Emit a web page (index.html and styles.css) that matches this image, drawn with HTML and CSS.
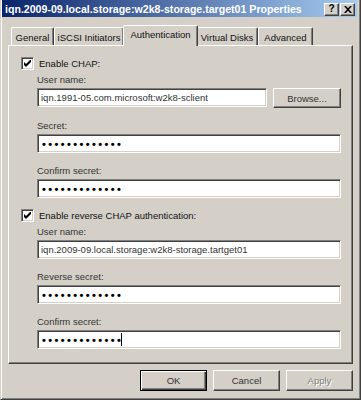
FILE: index.html
```html
<!DOCTYPE html>
<html>
<head>
<meta charset="utf-8">
<link rel="stylesheet" href="styles.css">
</head>
<body>
<div class="window">
  <div class="titlebar">
    <span class="title">iqn.2009-09.local.storage:w2k8-storage.target01 Properties</span>
    <div class="tbtns">
      <span class="tbtn help">?</span>
      <span class="tbtn close"><svg width="8" height="7" viewBox="0 0 8 7"><path d="M0 0h2l2 2.2L6 0h2L5 3.5 8 7H6L4 4.8 2 7H0l3-3.5z" fill="#000"/></svg></span>
    </div>
  </div>
  <div class="tabs">
    <div class="tab t-general">General</div>
    <div class="tab t-iscsi">iSCSI Initiators</div>
    <div class="tab t-auth active">Authentication</div>
    <div class="tab t-vd">Virtual Disks</div>
    <div class="tab t-adv">Advanced</div>
  </div>
  <div class="panel">
    <div class="check-row">
      <span class="checkbox"><svg width="7" height="7" viewBox="0 0 7 7"><path d="M0 2v3l2 2 5-5V-1L2 4z" fill="#000"/></svg></span>
      <span>Enable CHAP:</span>
    </div>
    <div class="group first">
      <div class="label">User name:</div>
      <div class="row">
        <div class="field short">iqn.1991-05.com.microsoft:w2k8-sclient</div>
        <div class="button browse">Browse...</div>
      </div>
    </div>
    <div class="group">
      <div class="label">Secret:</div>
      <div class="field"><span class="dots">•••••••••••••</span></div>
    </div>
    <div class="group">
      <div class="label">Confirm secret:</div>
      <div class="field"><span class="dots">•••••••••••••</span></div>
    </div>
    <div class="check-row second">
      <span class="checkbox"><svg width="7" height="7" viewBox="0 0 7 7"><path d="M0 2v3l2 2 5-5V-1L2 4z" fill="#000"/></svg></span>
      <span>Enable reverse CHAP authentication:</span>
    </div>
    <div class="group first">
      <div class="label">User name:</div>
      <div class="field">iqn.2009-09.local.storage:w2k8-storage.tartget01</div>
    </div>
    <div class="group">
      <div class="label">Reverse secret:</div>
      <div class="field"><span class="dots">•••••••••••••</span></div>
    </div>
    <div class="group">
      <div class="label">Confirm secret:</div>
      <div class="field focused"><span class="dots">•••••••••••••</span><span class="caret"></span></div>
    </div>
  </div>
  <div class="footer">
    <div class="button default">OK</div>
    <div class="button">Cancel</div>
    <div class="button disabled">Apply</div>
  </div>
</div>
</body>
</html>
```
FILE: styles.css
```css
html, body {
  margin: 0;
  padding: 0;
  background: #d4d0c8;
  overflow: hidden;
}
body {
  font-family: "Liberation Sans", Arial, sans-serif;
  font-size: 9.5px;
  color: #111;
}
.window {
  width: 361px;
  height: 400px;
  box-sizing: border-box;
  background: #d4d0c8;
  border-left: 1px solid #d4d0c8;
  border-right: 1px solid #404040;
  border-bottom: 1px solid #404040;
  box-shadow: inset 1px 0 0 #fff, inset -1px -1px 0 #808080;
  padding: 0 2px 0 1px;
  display: flex;
  flex-direction: column;
}
.titlebar {
  height: 17px;
  background: linear-gradient(to right, #0a246a, #a6caf0);
  display: flex;
  align-items: center;
  justify-content: space-between;
  padding: 0 2px 0 3px;
  margin-right: 1px;
  margin-bottom: -1px;
}
.title {
  color: #fff;
  font-weight: bold;
  font-size: 10.6px;
  white-space: nowrap;
}
.tbtns {
  display: flex;
  gap: 1px;
  margin-top: 1px;
}
.tbtn {
  width: 15px;
  height: 13px;
  box-sizing: border-box;
  background: #d4d0c8;
  border-top: 1px solid #fff;
  border-left: 1px solid #fff;
  border-right: 1px solid #404040;
  border-bottom: 1px solid #404040;
  box-shadow: inset -1px -1px 0 #808080;
  display: flex;
  align-items: center;
  justify-content: center;
  font-weight: bold;
  font-size: 10px;
  color: #000;
  line-height: 1;
}
.tabs {
  display: flex;
  align-items: flex-end;
  height: 20px;
  margin-top: 9px;
  padding-left: 9px;
}
.tab {
  height: 18px;
  box-sizing: border-box;
  border-top: 1px solid #fff;
  border-left: 1px solid #fff;
  border-right: 1px solid #404040;
  box-shadow: inset -1px 0 0 #808080;
  border-top-left-radius: 2px;
  border-top-right-radius: 2px;
  display: flex;
  align-items: center;
  justify-content: center;
  font-size: 9.5px;
  color: #111;
  padding-top: 1px;
}
.t-general { width: 43px; }
.t-iscsi { width: 70px; }
.t-auth { width: 75px; }
.t-vd { width: 62px; }
.t-adv { width: 55px; }
.tab.active {
  height: 21px;
  margin: 0 -2px -1px -1px;
  position: relative;
  z-index: 1;
  background: #d4d0c8;
  padding-top: 0;
  padding-bottom: 3px;
}
.panel {
  margin: 0 5px 0 6px;
  height: 319px;
  box-sizing: border-box;
  border-top: 1px solid #fff;
  border-left: 1px solid #fff;
  border-right: 1px solid #404040;
  border-bottom: 1px solid #404040;
  box-shadow: inset -1px -1px 0 #808080;
  padding: 11px 11px 0 12px;
  display: flex;
  flex-direction: column;
}
.check-row {
  display: flex;
  align-items: center;
  height: 13px;
  gap: 5px;
}
.check-row.second {
  margin-top: 11px;
}
.checkbox {
  width: 13px;
  height: 13px;
  box-sizing: border-box;
  background: #fff;
  border-top: 1px solid #808080;
  border-left: 1px solid #808080;
  border-right: 1px solid #fff;
  border-bottom: 1px solid #fff;
  box-shadow: inset 1px 1px 0 #404040, inset -1px -1px 0 #d4d0c8;
  display: flex;
  align-items: center;
  justify-content: center;
}
.group {
  margin-left: 16px;
  margin-top: 11px;
}
.group.first {
  margin-top: 3px;
}
.label {
  height: 13px;
  line-height: 13px;
  margin-bottom: 2px;
  color: #333;
}
.row {
  display: flex;
  align-items: flex-start;
  gap: 6px;
}
.field {
  width: 304px;
  height: 19px;
  box-sizing: border-box;
  background: #fff;
  border-top: 1px solid #808080;
  border-left: 1px solid #808080;
  border-right: 1px solid #fff;
  border-bottom: 1px solid #fff;
  box-shadow: inset 1px 1px 0 #404040, inset -1px -1px 0 #d4d0c8;
  padding: 0 3px;
  display: flex;
  align-items: center;
  white-space: nowrap;
  overflow: hidden;
  color: #333;
}
.field.short {
  width: 230px;
}
.dots {
  font-size: 11px;
  font-weight: bold;
  letter-spacing: 2.4px;
  color: #000;
  padding-left: 1px;
}
.caret {
  display: inline-block;
  width: 1px;
  height: 13px;
  background: #000;
  margin-left: -2px;
}
.button {
  width: 67px;
  height: 21px;
  box-sizing: border-box;
  background: #d4d0c8;
  border-top: 1px solid #fff;
  border-left: 1px solid #fff;
  border-right: 1px solid #404040;
  border-bottom: 1px solid #404040;
  box-shadow: inset -1px -1px 0 #808080;
  display: flex;
  align-items: center;
  justify-content: center;
  color: #333;
}
.browse {
  width: 68px;
  height: 20px;
}
.button.default {
  border: 1px solid #000;
  box-shadow: inset 1px 1px 0 #fff, inset -1px -1px 0 #404040, inset -2px -2px 0 #808080;
}
.button.disabled {
  color: #808080;
  text-shadow: 1px 1px 0 #fff;
}
.footer {
  display: flex;
  justify-content: flex-end;
  gap: 6px;
  margin-top: 6px;
  padding-right: 5px;
}
```
